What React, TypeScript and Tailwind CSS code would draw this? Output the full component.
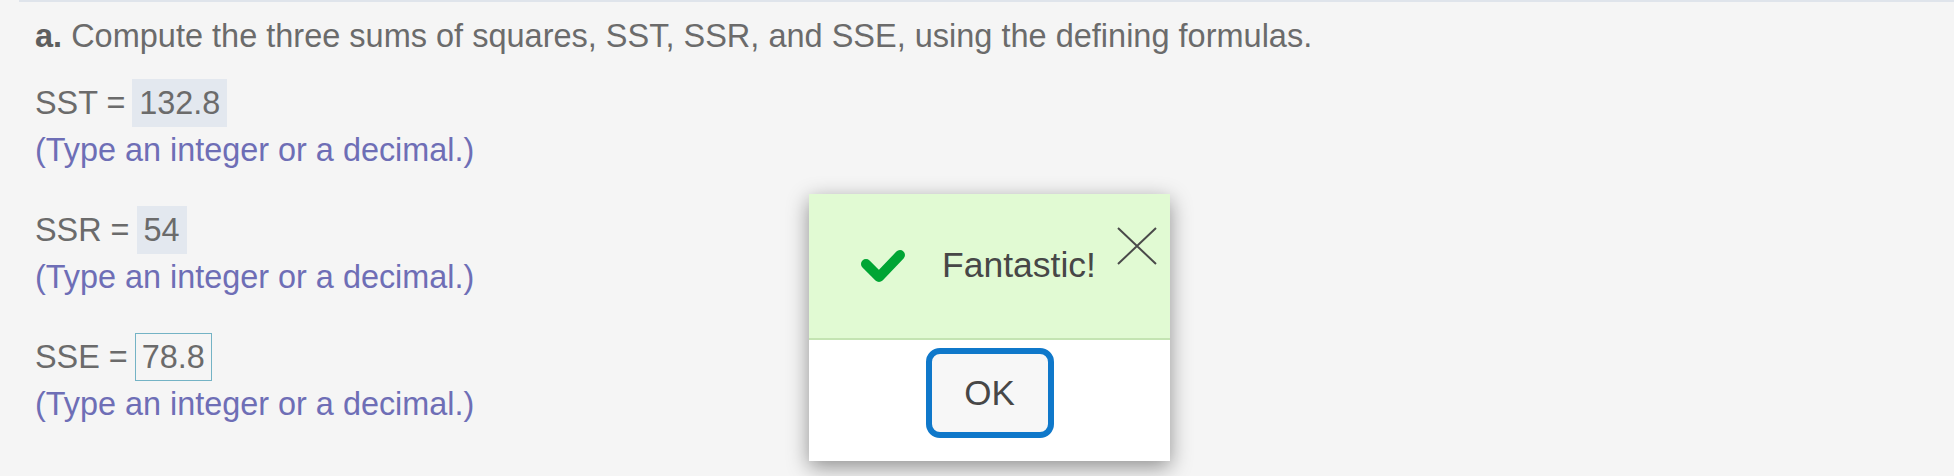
import React from 'react';

const font = { fontFamily: '"Liberation Sans", Arial, Helvetica, sans-serif' };

type Answer = { label: string; value: string; active?: boolean };

const answers: Answer[] = [
  { label: 'SST =', value: '132.8' },
  { label: 'SSR =', value: '54' },
  { label: 'SSE =', value: '78.8', active: true },
];

function AnswerRow({ label, value, active }: Answer) {
  return (
    <div>
      <div className="flex items-center h-[48px] text-[32.4px] leading-[48px] text-[#6b6b6b]">
        <span>{label}</span>
        <span
          className={
            active
              ? 'ml-[7px] h-[48px] px-[6px] border border-[#74b3c5] leading-[46px]'
              : 'ml-[7px] h-[48px] px-[7px] bg-[#e3e8ef]'
          }
        >
          {value}
        </span>
      </div>
      <div className="mt-[4px] text-[32.4px] leading-[38px] text-[#6e6eb6]">(Type an integer or a decimal.)</div>
    </div>
  );
}

function Check() {
  return (
    <svg width="52" height="42" viewBox="0 0 52 42" className="shrink-0">
      <polyline
        points="8,19 21,32 42,10"
        fill="none"
        stroke="#00a534"
        strokeWidth="10"
        strokeLinecap="round"
        strokeLinejoin="round"
      />
    </svg>
  );
}

function FeedbackDialog() {
  return (
    <div className="absolute left-[809px] top-[194px] w-[361px] h-[267px] flex flex-col bg-white shadow-[0_6px_20px_rgba(0,0,0,0.42)]">
      <div className="relative h-[146px] flex items-center pl-[49px] bg-[#e1fad3] border-b-2 border-[#c4e4b2]">
        <Check />
        <span className="ml-[32px] text-[35.5px] text-[#474747]">Fantastic!</span>
        <button className="absolute top-[33px] right-[13px]" aria-label="Close">
          <svg width="40" height="38" viewBox="0 0 40 38">
            <path d="M1 1 L39 37 M39 1 L1 37" stroke="#4a4a4a" strokeWidth="2" fill="none" />
          </svg>
        </button>
      </div>
      <div className="flex-1 flex justify-center pt-[8px]">
        <button className="w-[128px] h-[90px] rounded-[14px] border-[6px] border-[#0f78ca] bg-[#f7f7f7] text-[35px] text-[#474747]">
          OK
        </button>
      </div>
    </div>
  );
}

export default function App() {
  return (
    <div className="relative w-[1954px] h-[476px] bg-[#f5f5f5] overflow-hidden" style={font}>
      <div className="ml-[19px] border-t-2 border-[#dfe4eb] pl-[16px] pt-[14px]">
        <div className="text-[32.5px] leading-[40px] text-[#6b6b6b]">
          <b className="text-[#5e5e5e]">a.</b> Compute the three sums of squares, SST, SSR, and SSE, using the defining formulas.
        </div>
        <div className="mt-[23px] flex flex-col gap-[37px]">
          {answers.map((a) => (
            <AnswerRow key={a.label} {...a} />
          ))}
        </div>
      </div>
      <FeedbackDialog />
    </div>
  );
}
